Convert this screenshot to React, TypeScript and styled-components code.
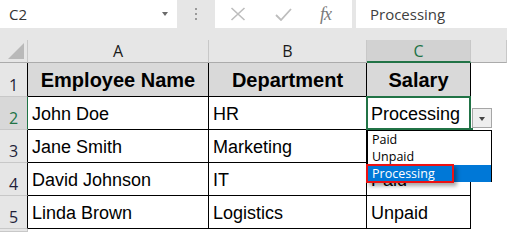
import { Fragment } from "react";
import { createGlobalStyle, styled } from "styled-components";

const GlobalStyle = createGlobalStyle`
    html, body {
        margin: 0;
        padding: 0;
        background: #ffffff;
        overflow: hidden;
    }
`

const Window = styled.div`
    background: #e6e6e6;
    width: 507px;
    height: 232px;
    display: flex;
    flex-direction: column;
    gap: 12px;
    overflow: hidden;
    font-family: "Open Sans", sans-serif;
`

const FormulaBar = styled.div`
    display: flex;
    flex-shrink: 0;
    height: 28px;
`

const NameBox = styled.div`
    background: #ffffff;
    width: 177px;
    display: flex;
    align-items: center;
    justify-content: space-between;
    padding: 0 9px;
    box-sizing: border-box;
    font-size: 15px;
    color: #333333;
`

const Caret = styled.span`
    width: 0;
    height: 0;
    border-left: 3.5px solid transparent;
    border-right: 3.5px solid transparent;
    border-top: 4px solid #6a6a6a;
`

const Grip = styled.div`
    width: 38px;
    display: flex;
    flex-direction: column;
    align-items: center;
    justify-content: center;
    gap: 3px;

    span {
        width: 2px;
        height: 2px;
        background: #9a9a9a;
    }
`

const ActionBox = styled.div`
    background: #ffffff;
    width: 137px;
    display: flex;
    align-items: center;
    padding-left: 15px;
    box-sizing: border-box;
`

const ActionSlot = styled.div<{ $w: number }>`
    width: ${props => props.$w}px;
    display: flex;
    align-items: center;
`

const Fx = styled.span`
    font-family: "Liberation Serif", serif;
    font-style: italic;
    font-size: 18px;
    color: #7a7a7a;
    letter-spacing: -1px;
`

const FormulaInput = styled.div`
    background: #ffffff;
    flex: 1;
    margin-left: 4px;
    display: flex;
    align-items: center;
    padding-left: 14px;
    font-size: 15px;
    color: #404040;
`

const Sheet = styled.div`
    display: grid;
    grid-template-columns: 28px 181px 158px 104px 1fr;
    grid-template-rows: 23px 34px repeat(4, 33px) minmax(0, 1fr);
    flex: 1;
    min-height: 0;
    background: #ffffff;
`

const Corner = styled.div`
    background: #e6e6e6;
    border-right: 1px solid #c8c8c8;
    border-bottom: 1px solid #ababab;
    display: flex;
    align-items: flex-end;
    justify-content: flex-end;
    padding: 0 3px 3px 0;
    box-sizing: border-box;
`

const CornerMark = styled.span`
    width: 0;
    height: 0;
    border-left: 16px solid transparent;
    border-bottom: 16px solid #b9b9b9;
`

const ColHead = styled.div<{ $active?: boolean }>`
    background: ${props => props.$active ? "#d2d2d2" : "#e6e6e6"};
    border-right: 1px solid #c8c8c8;
    border-bottom: ${props => props.$active ? "2px solid #217346" : "1px solid #ababab"};
    color: ${props => props.$active ? "#217346" : "#1a1a1a"};
    display: flex;
    align-items: center;
    justify-content: center;
    font-size: 16px;
    box-sizing: border-box;
`

const RowHead = styled.div<{ $active?: boolean; $edge?: boolean }>`
    background: ${props => props.$active ? "#d8d8d8" : "#e6e6e6"};
    border-right: 1px solid ${props => props.$active ? "#217346" : props.$edge ? "#000000" : "#c8c8c8"};
    border-bottom: 1px solid #c8c8c8;
    color: ${props => props.$active ? "#217346" : "#1f1f3a"};
    display: flex;
    align-items: flex-end;
    justify-content: center;
    padding-bottom: 1px;
    font-size: 16px;
    line-height: 20px;
    box-sizing: border-box;
    overflow: hidden;
`

const Cell = styled.div<{ $head?: boolean }>`
    position: relative;
    background: ${props => props.$head ? "#d9d9d9" : "#ffffff"};
    border-right: 1px solid #000000;
    border-bottom: 1px solid #000000;
    display: flex;
    align-items: flex-end;
    justify-content: ${props => props.$head ? "center" : "flex-start"};
    padding: 0 0 4px ${props => props.$head ? 0 : 4}px;
    font-family: "Liberation Sans", Arial, sans-serif;
    font-size: ${props => props.$head ? 20 : 18}px;
    font-weight: ${props => props.$head ? 700 : 400};
    line-height: ${props => props.$head ? 23 : 21}px;
    color: #000000;
    box-sizing: border-box;
    white-space: nowrap;
`

const Blank = styled.div`
    background: #ffffff;
`

const ActiveFrame = styled.span`
    position: absolute;
    inset: -1px;
    border: 2px solid #217346;
    pointer-events: none;
`

const FillHandle = styled.span`
    position: absolute;
    right: -3px;
    bottom: -3px;
    width: 4px;
    height: 4px;
    background: #217346;
`

const DropButton = styled.div`
    position: absolute;
    left: 105px;
    top: 11px;
    width: 20px;
    height: 20px;
    box-sizing: border-box;
    background: #eeeeee;
    border: 1px solid #a6a6a6;
    display: flex;
    align-items: center;
    justify-content: center;
    z-index: 5;
`

const DropCaret = styled.span`
    width: 0;
    height: 0;
    border-left: 3.5px solid transparent;
    border-right: 3.5px solid transparent;
    border-top: 4px solid #444444;
    margin-top: 1px;
`

const DropList = styled.div`
    position: absolute;
    left: 0;
    top: 33px;
    width: 125px;
    height: 52px;
    box-sizing: border-box;
    background: #ffffff;
    border: 1px solid #000000;
    z-index: 6;
    font-family: "Open Sans", sans-serif;
    font-weight: 400;
`

const DropItem = styled.div<{ $hot?: boolean }>`
    position: relative;
    height: 17px;
    line-height: 17px;
    padding-left: 4px;
    font-size: 12.5px;
    background: ${props => props.$hot ? "#0078d7" : "transparent"};
    color: ${props => props.$hot ? "#ffffff" : "#000000"};
`

const Callout = styled.span`
    position: absolute;
    left: -2px;
    top: -1px;
    width: 88px;
    height: 19px;
    box-sizing: border-box;
    border: 2px solid #ee1111;
    box-shadow: 3px 3px 4px rgba(0, 0, 0, 0.35);
`

const rows = [
    ["John Doe", "HR", "Processing"],
    ["Jane Smith", "Marketing", "Paid"],
    ["David Johnson", "IT", "Paid"],
    ["Linda Brown", "Logistics", "Unpaid"],
]

const App = () => {
    return (
        <>
            <GlobalStyle />
            <Window>
                <FormulaBar>
                    <NameBox>
                        C2
                        <Caret />
                    </NameBox>
                    <Grip>
                        <span />
                        <span />
                        <span />
                    </Grip>
                    <ActionBox>
                        <ActionSlot $w={45}>
                            <svg width="16" height="14" viewBox="0 0 16 14">
                                <path d="M1.5 1 L14.5 13 M14.5 1 L1.5 13" stroke="#bdbdbd" strokeWidth="1.6" fill="none" />
                            </svg>
                        </ActionSlot>
                        <ActionSlot $w={45}>
                            <svg width="17" height="13" viewBox="0 0 17 13">
                                <path d="M1 7 L6 12 L16 1" stroke="#bdbdbd" strokeWidth="1.8" fill="none" />
                            </svg>
                        </ActionSlot>
                        <ActionSlot $w={20}>
                            <Fx>fx</Fx>
                        </ActionSlot>
                    </ActionBox>
                    <FormulaInput>Processing</FormulaInput>
                </FormulaBar>
                <Sheet>
                    <Corner>
                        <CornerMark />
                    </Corner>
                    <ColHead>A</ColHead>
                    <ColHead>B</ColHead>
                    <ColHead $active>C</ColHead>
                    <ColHead />

                    <RowHead $edge>1</RowHead>
                    <Cell $head>Employee Name</Cell>
                    <Cell $head>Department</Cell>
                    <Cell $head>Salary</Cell>
                    <Blank />

                    {rows.map((row, i) => (
                        <Fragment key={i}>
                            <RowHead $edge $active={i === 0}>{i + 2}</RowHead>
                            <Cell>{row[0]}</Cell>
                            <Cell>{row[1]}</Cell>
                            <Cell>
                                {row[2]}
                                {i === 0 && (
                                    <>
                                        <ActiveFrame />
                                        <FillHandle />
                                        <DropButton>
                                            <DropCaret />
                                        </DropButton>
                                        <DropList>
                                            <DropItem>Paid</DropItem>
                                            <DropItem>Unpaid</DropItem>
                                            <DropItem $hot>
                                                Processing
                                                <Callout />
                                            </DropItem>
                                        </DropList>
                                    </>
                                )}
                            </Cell>
                            <Blank />
                        </Fragment>
                    ))}

                    <RowHead />
                    <Blank />
                    <Blank />
                    <Blank />
                    <Blank />
                </Sheet>
            </Window>
        </>
    );
}

export default App;
